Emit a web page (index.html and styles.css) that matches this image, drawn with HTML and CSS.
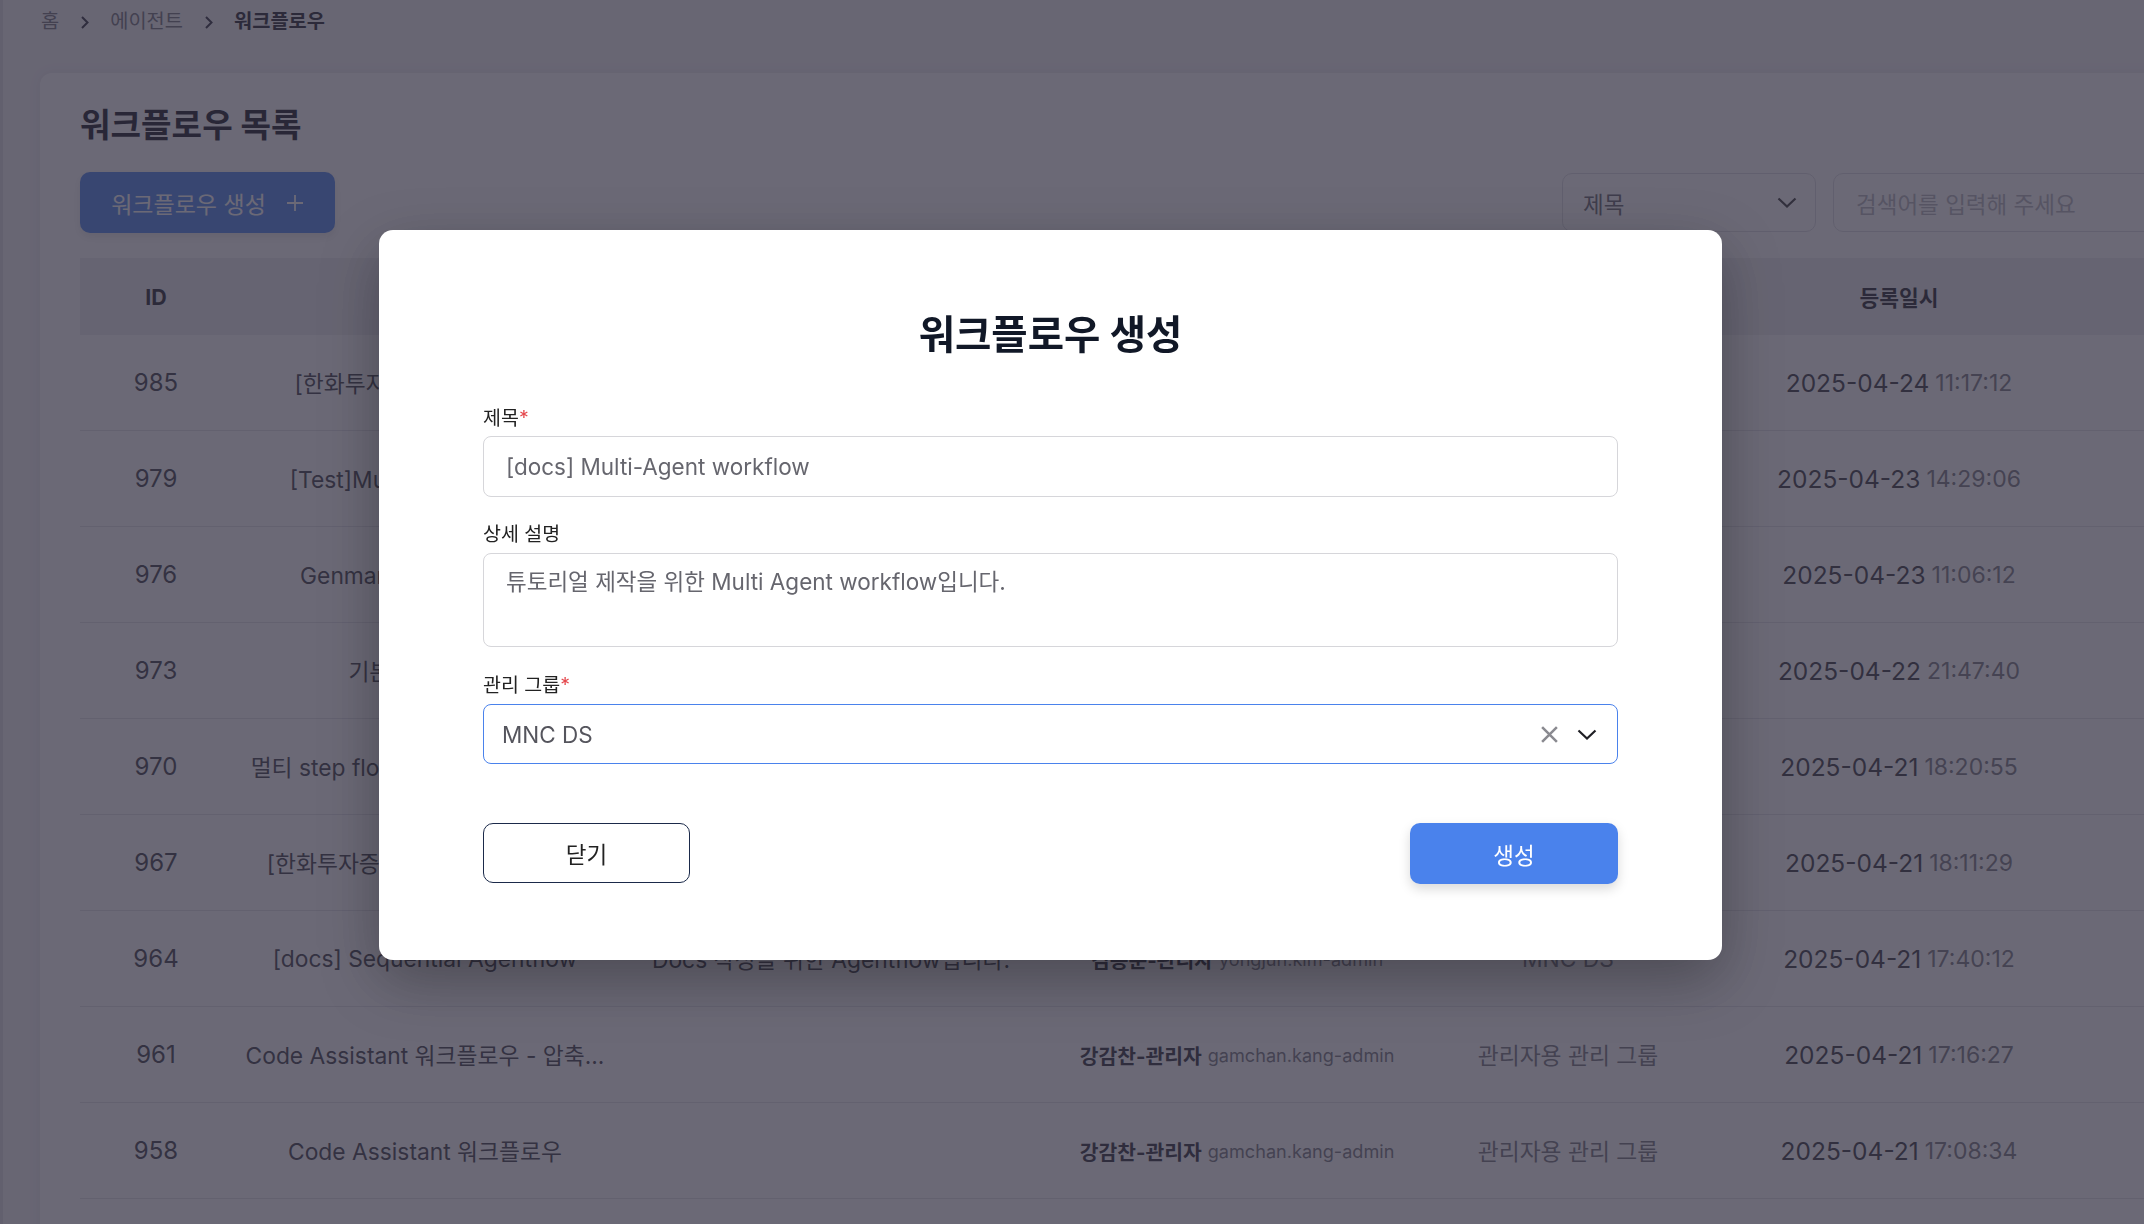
FILE: index.html
```html
<!DOCTYPE html>
<html lang="ko">
<head>
<meta charset="utf-8">
<title>워크플로우 목록</title>
<link rel="stylesheet" href="styles.css">
</head>
<body>
<div class="page">
  <nav class="crumbs">
    <span class="crumb">홈</span>
    <svg class="crumb-sep" viewBox="0 0 11 14"><path d="M3 2l5.5 5.5L3 13"/></svg>
    <span class="crumb">에이전트</span>
    <svg class="crumb-sep" viewBox="0 0 11 14"><path d="M3 2l5.5 5.5L3 13"/></svg>
    <span class="crumb current">워크플로우</span>
  </nav>

  <main class="card">
    <h1 class="page-title">워크플로우 목록</h1>
    <div class="toolbar">
      <button class="btn-create">워크플로우 생성
        <svg class="plus" viewBox="0 0 18 18"><path d="M9 1v16M1 9h16"/></svg>
      </button>
      <div class="search">
        <div class="search-select">
          <span>제목</span>
          <svg class="chev" viewBox="0 0 20 11"><path d="M1.5 1.5l8.5 8 8.5-8"/></svg>
        </div>
        <div class="search-input">검색어를 입력해 주세요</div>
      </div>
    </div>

    <div class="table">
      <div class="row head">
        <div class="cell">ID</div>
        <div class="cell">제목</div>
        <div class="cell">설명</div>
        <div class="cell">생성자</div>
        <div class="cell">관리 그룹</div>
        <div class="cell">등록일시</div>
        <div class="cell">관리</div>
      </div>
      <div class="row">
        <div class="cell id">985</div>
        <div class="cell">[한화투자증권] AI 리서치팀</div>
        <div class="cell">리서치 보고서 요약 워크플로우</div>
        <div class="cell"><b class="user">홍길동-관리자</b><span class="login">gildong.hong-admin</span></div>
        <div class="cell muted">MNC DS</div>
        <div class="cell"><span class="date">2025-04-24</span><span class="time">11:17:12</span></div>
        <div class="cell"></div>
      </div>
      <div class="row">
        <div class="cell id">979</div>
        <div class="cell">[Test]Multi Agent 테스트 1</div>
        <div class="cell">멀티 에이전트 테스트</div>
        <div class="cell"><b class="user">김용준-관리자</b><span class="login">yongjun.kim-admin</span></div>
        <div class="cell muted">MNC DS</div>
        <div class="cell"><span class="date">2025-04-23</span><span class="time">14:29:06</span></div>
        <div class="cell"></div>
      </div>
      <div class="row">
        <div class="cell id">976</div>
        <div class="cell">Genmarket 워크플로우 2</div>
        <div class="cell">Genmarket 테스트</div>
        <div class="cell"><b class="user">김용준-관리자</b><span class="login">yongjun.kim-admin</span></div>
        <div class="cell muted">MNC DS</div>
        <div class="cell"><span class="date">2025-04-23</span><span class="time">11:06:12</span></div>
        <div class="cell"></div>
      </div>
      <div class="row">
        <div class="cell id">973</div>
        <div class="cell">기본 워크플로우</div>
        <div class="cell">기본 워크플로우입니다.</div>
        <div class="cell"><b class="user">김용준-관리자</b><span class="login">yongjun.kim-admin</span></div>
        <div class="cell muted">MNC DS</div>
        <div class="cell"><span class="date">2025-04-22</span><span class="time">21:47:40</span></div>
        <div class="cell"></div>
      </div>
      <div class="row">
        <div class="cell id">970</div>
        <div class="cell">멀티 step flow 워크플로우 테스트용</div>
        <div class="cell">멀티 step 테스트</div>
        <div class="cell"><b class="user">김용준-관리자</b><span class="login">yongjun.kim-admin</span></div>
        <div class="cell muted">MNC DS</div>
        <div class="cell"><span class="date">2025-04-21</span><span class="time">18:20:55</span></div>
        <div class="cell"></div>
      </div>
      <div class="row">
        <div class="cell id">967</div>
        <div class="cell">[한화투자증권]리서치 워크플로우</div>
        <div class="cell">리서치 워크플로우</div>
        <div class="cell"><b class="user">김용준-관리자</b><span class="login">yongjun.kim-admin</span></div>
        <div class="cell muted">MNC DS</div>
        <div class="cell"><span class="date">2025-04-21</span><span class="time">18:11:29</span></div>
        <div class="cell"></div>
      </div>
      <div class="row">
        <div class="cell id">964</div>
        <div class="cell">[docs] Sequential Agentflow</div>
        <div class="cell">Docs 작성을 위한 Agentflow입니다.</div>
        <div class="cell"><b class="user">김용준-관리자</b><span class="login">yongjun.kim-admin</span></div>
        <div class="cell muted">MNC DS</div>
        <div class="cell"><span class="date">2025-04-21</span><span class="time">17:40:12</span></div>
        <div class="cell"></div>
      </div>
      <div class="row">
        <div class="cell id">961</div>
        <div class="cell">Code Assistant 워크플로우 - 압축...</div>
        <div class="cell"></div>
        <div class="cell"><b class="user">강감찬-관리자</b><span class="login">gamchan.kang-admin</span></div>
        <div class="cell muted">관리자용 관리 그룹</div>
        <div class="cell"><span class="date">2025-04-21</span><span class="time">17:16:27</span></div>
        <div class="cell"></div>
      </div>
      <div class="row">
        <div class="cell id">958</div>
        <div class="cell">Code Assistant 워크플로우</div>
        <div class="cell"></div>
        <div class="cell"><b class="user">강감찬-관리자</b><span class="login">gamchan.kang-admin</span></div>
        <div class="cell muted">관리자용 관리 그룹</div>
        <div class="cell"><span class="date">2025-04-21</span><span class="time">17:08:34</span></div>
        <div class="cell"></div>
      </div>
      <div class="row">
        <div class="cell id">955</div>
        <div class="cell">Code Assistant</div>
        <div class="cell"></div>
        <div class="cell"><b class="user">강감찬-관리자</b><span class="login">gamchan.kang-admin</span></div>
        <div class="cell muted">관리자용 관리 그룹</div>
        <div class="cell"><span class="date">2025-04-21</span><span class="time">16:52:10</span></div>
        <div class="cell"></div>
      </div>
    </div>
  </main>
</div>

<div class="overlay"></div>

<section class="modal" role="dialog" aria-labelledby="modal-title">
  <h2 class="modal-title" id="modal-title">워크플로우 생성</h2>

  <div class="field first">
    <label class="field-label">제목<span class="req">*</span></label>
    <input class="text-input" type="text" value="[docs] Multi-Agent workflow">
  </div>

  <div class="field second">
    <label class="field-label">상세 설명</label>
    <textarea class="text-area">튜토리얼 제작을 위한 Multi Agent workflow입니다.</textarea>
  </div>

  <div class="field third">
    <label class="field-label">관리 그룹<span class="req">*</span></label>
    <div class="select">
      <span class="select-value">MNC DS</span>
      <svg class="clear" viewBox="0 0 18 18"><path d="M2 2l14 14M16 2L2 16"/></svg>
      <svg class="chev dark" viewBox="0 0 20 11"><path d="M1.5 1.5l8.5 8 8.5-8"/></svg>
    </div>
  </div>

  <div class="actions">
    <button class="btn-close">닫기</button>
    <button class="btn-submit">생성</button>
  </div>
</section>
</body>
</html>
```

FILE: styles.css
```css
* { box-sizing: border-box; }

html, body {
  margin: 0;
  height: 100%;
  overflow: hidden;
}

body {
  font-family: Inter, "Noto Sans CJK KR", sans-serif;
  background: #f3f2f5;
  color: #333;
  border-left: 3px solid #dedde3;
}

/* breadcrumb */
.crumbs {
  height: 38px;
  display: flex;
  align-items: center;
  gap: 20px;
  padding-left: 38px;
  font-size: 19.8px;
  color: #6f6f78;
}
.crumb.current {
  font-weight: 700;
  color: #1d1d28;
}
.crumb-sep {
  width: 11px;
  height: 14px;
  margin-top: 5px;
  fill: none;
  stroke: #2a2a36;
  stroke-width: 2;
}

/* card */
.card {
  margin: 35px 0 0 37px;
  width: 2300px;
  min-height: 1300px;
  background: #fff;
  border-radius: 12px 0 0 0;
  padding: 29px 40px 0;
  box-shadow: 0 0 14px rgba(0, 0, 0, 0.06);
}
.page-title {
  margin: 0;
  font-size: 33.2px;
  line-height: 46px;
  font-weight: 700;
  color: #15151f;
}
.toolbar {
  margin-top: 24px;
  height: 61px;
  display: flex;
  align-items: center;
  justify-content: space-between;
}
.btn-create {
  width: 255px;
  height: 61px;
  border: none;
  border-radius: 10px;
  background: #4a82ec;
  color: #fff;
  font-family: inherit;
  font-size: 23px;
  display: flex;
  align-items: center;
  justify-content: center;
  gap: 20px;
  box-shadow: 0 4px 10px rgba(0, 0, 0, 0.1);
}
.plus {
  width: 18px;
  height: 18px;
  fill: none;
  stroke: #fff;
  stroke-width: 1.8;
}
.search {
  display: flex;
  gap: 17px;
}
.search-select {
  width: 254px;
  height: 59px;
  border: 1px solid #dcdce1;
  border-radius: 10px;
  display: flex;
  align-items: center;
  justify-content: space-between;
  padding: 0 18px 0 20px;
  font-size: 22.5px;
  color: #62626a;
}
.chev {
  width: 20px;
  height: 11px;
  fill: none;
  stroke: #333;
  stroke-width: 2.2;
}
.search-input {
  width: 467px;
  height: 59px;
  border: 1px solid #dcdce1;
  border-radius: 10px;
  display: flex;
  align-items: center;
  padding-left: 22px;
  font-size: 22.5px;
  color: #b4b4ba;
}

/* table */
.table {
  margin-top: 25px;
}
.row {
  display: grid;
  grid-template-columns: 152px 386px 426px 386px 276px 386px 208px;
  height: 96px;
  border-bottom: 1px solid #e2e2e7;
  font-size: 22.8px;
  color: #3b3b44;
}
.row.head {
  height: 77px;
  background: #eeeef1;
  border-bottom: none;
  font-size: 21.5px;
  font-weight: 700;
  color: #1f1f28;
}
.cell {
  display: flex;
  align-items: center;
  justify-content: center;
  white-space: nowrap;
  overflow: hidden;
  padding: 0 6px;
}
.cell.id {
  font-size: 24px;
}
.user {
  font-size: 20.4px;
  font-weight: 700;
  color: #2a2a33;
  margin-right: 6px;
}
.login {
  font-size: 18.1px;
  color: #74747c;
}
.muted {
  color: #74747c;
}
.date {
  font-size: 24.5px;
  color: #33333c;
  margin-right: 6px;
}
.time {
  font-size: 23px;
  color: #76767e;
}

/* overlay + modal */
.overlay {
  position: fixed;
  inset: 0;
  background: rgba(50, 47, 65, 0.72);
}
.modal {
  position: fixed;
  left: 379px;
  top: 230px;
  width: 1343px;
  height: 730px;
  background: #fff;
  border-radius: 14px;
  padding: 77px 104px;
  display: flex;
  flex-direction: column;
  box-shadow: 0 20px 60px rgba(0, 0, 0, 0.3);
}
.modal-title {
  margin: 0;
  text-align: center;
  font-size: 39.5px;
  line-height: 56px;
  font-weight: 700;
  color: #111827;
}
.field {
  display: flex;
  flex-direction: column;
}
.field.first { margin-top: 42px; gap: 5px; }
.field.second { margin-top: 24px; gap: 6px; }
.field.third { margin-top: 25px; gap: 6px; }
.field-label {
  font-size: 19.5px;
  line-height: 26px;
  color: #222;
}
.req {
  color: #e5484d;
}
.text-input {
  height: 61px;
  border: 1px solid #d6d6da;
  border-radius: 8px;
  padding: 0 22px;
  font-family: inherit;
  font-size: 22.5px;
  color: #66666e;
  outline: none;
}
.text-area {
  height: 94px;
  border: 1px solid #d6d6da;
  border-radius: 8px;
  padding: 13px 22px;
  font-family: inherit;
  font-size: 22.5px;
  line-height: 30px;
  color: #66666e;
  resize: none;
  outline: none;
}
.select {
  height: 60px;
  border: 1.5px solid #4a82ec;
  border-radius: 8px;
  display: flex;
  align-items: center;
  padding: 0 20px 0 18px;
}
.select-value {
  flex: 1;
  font-size: 22.5px;
  color: #55555d;
}
.clear {
  width: 19px;
  height: 19px;
  fill: none;
  stroke: #8a8a90;
  stroke-width: 2.4;
  margin-right: 18px;
}
.chev.dark {
  stroke: #1f1f24;
}
.actions {
  margin-top: 59px;
  display: flex;
  justify-content: space-between;
}
.btn-close {
  width: 207px;
  height: 60px;
  background: #fff;
  border: 1.5px solid #1b2a4a;
  border-radius: 10px;
  font-family: inherit;
  font-size: 22.5px;
  color: #222;
}
.btn-submit {
  width: 208px;
  height: 61px;
  background: #4a82ec;
  border: none;
  border-radius: 10px;
  font-family: inherit;
  font-size: 22.5px;
  color: #fff;
  box-shadow: 0 5px 12px rgba(0, 0, 0, 0.15);
}
```
